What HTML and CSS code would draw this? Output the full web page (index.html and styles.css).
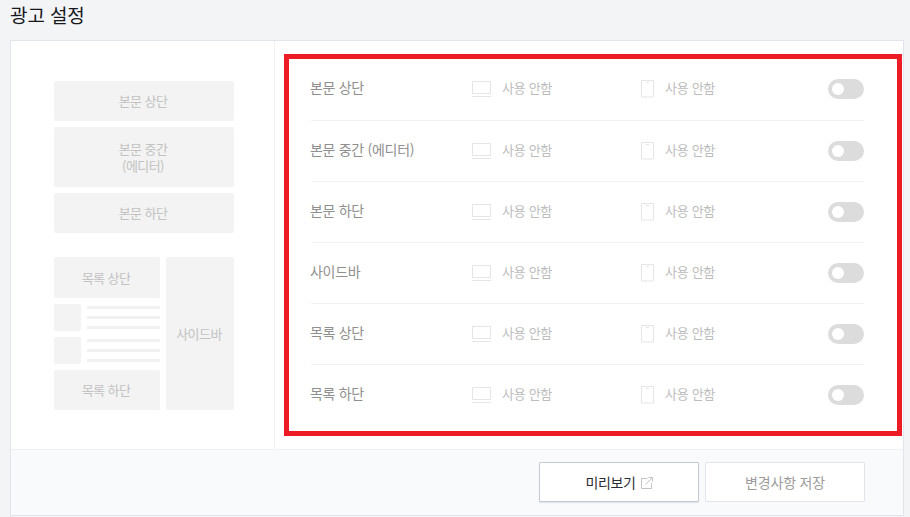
FILE: index.html
```html
<!DOCTYPE html>
<html lang="ko">
<head>
<meta charset="utf-8">
<title>광고 설정</title>
<link rel="stylesheet" href="styles.css">
</head>
<body>
<h1 class="title">광고 설정</h1>
<section class="card">
  <div class="main">
    <aside class="preview">
      <div class="slots">
        <div class="slot h40">본문 상단</div>
        <div class="slot h60">본문 중간<br>(에디터)</div>
        <div class="slot h40">본문 하단</div>
      </div>
      <div class="listing">
        <div class="list-col">
          <div class="slot h41">목록 상단</div>
          <div class="item"><div class="thumb"></div><div class="lines"><i></i><i></i><i></i></div></div>
          <div class="item"><div class="thumb"></div><div class="lines"><i></i><i></i><i></i></div></div>
          <div class="slot h40">목록 하단</div>
        </div>
        <div class="slot side">사이드바</div>
      </div>
    </aside>
    <div class="panel">
      <div class="row">
        <div class="name">본문 상단</div>
        <div class="device pc"><svg class="ico-pc" viewBox="0 0 20 16"><path d="M.5.5h18v12H.5z"/><path d="M0 15.500h19"/></svg><span>사용 안함</span></div>
        <div class="device mo"><svg class="ico-mo" viewBox="0 0 13 18"><path d="M.5.5h12v16.500H.5z"/><path class="dash" d="M5 2.500h3"/></svg><span>사용 안함</span></div>
        <div class="toggle"><b></b></div>
      </div>
      <div class="row">
        <div class="name">본문 중간 (에디터)</div>
        <div class="device pc"><svg class="ico-pc" viewBox="0 0 20 16"><path d="M.5.5h18v12H.5z"/><path d="M0 15.500h19"/></svg><span>사용 안함</span></div>
        <div class="device mo"><svg class="ico-mo" viewBox="0 0 13 18"><path d="M.5.5h12v16.500H.5z"/><path class="dash" d="M5 2.500h3"/></svg><span>사용 안함</span></div>
        <div class="toggle"><b></b></div>
      </div>
      <div class="row">
        <div class="name">본문 하단</div>
        <div class="device pc"><svg class="ico-pc" viewBox="0 0 20 16"><path d="M.5.5h18v12H.5z"/><path d="M0 15.500h19"/></svg><span>사용 안함</span></div>
        <div class="device mo"><svg class="ico-mo" viewBox="0 0 13 18"><path d="M.5.5h12v16.500H.5z"/><path class="dash" d="M5 2.500h3"/></svg><span>사용 안함</span></div>
        <div class="toggle"><b></b></div>
      </div>
      <div class="row">
        <div class="name">사이드바</div>
        <div class="device pc"><svg class="ico-pc" viewBox="0 0 20 16"><path d="M.5.5h18v12H.5z"/><path d="M0 15.500h19"/></svg><span>사용 안함</span></div>
        <div class="device mo"><svg class="ico-mo" viewBox="0 0 13 18"><path d="M.5.5h12v16.500H.5z"/><path class="dash" d="M5 2.500h3"/></svg><span>사용 안함</span></div>
        <div class="toggle"><b></b></div>
      </div>
      <div class="row">
        <div class="name">목록 상단</div>
        <div class="device pc"><svg class="ico-pc" viewBox="0 0 20 16"><path d="M.5.5h18v12H.5z"/><path d="M0 15.500h19"/></svg><span>사용 안함</span></div>
        <div class="device mo"><svg class="ico-mo" viewBox="0 0 13 18"><path d="M.5.5h12v16.500H.5z"/><path class="dash" d="M5 2.500h3"/></svg><span>사용 안함</span></div>
        <div class="toggle"><b></b></div>
      </div>
      <div class="row">
        <div class="name">목록 하단</div>
        <div class="device pc"><svg class="ico-pc" viewBox="0 0 20 16"><path d="M.5.5h18v12H.5z"/><path d="M0 15.500h19"/></svg><span>사용 안함</span></div>
        <div class="device mo"><svg class="ico-mo" viewBox="0 0 13 18"><path d="M.5.5h12v16.500H.5z"/><path class="dash" d="M5 2.500h3"/></svg><span>사용 안함</span></div>
        <div class="toggle"><b></b></div>
      </div>
    </div>
  </div>
  <footer class="actions">
    <button class="btn primary" type="button"><span class="btn-label">미리보기</span><svg class="ico-ext" viewBox="0 0 12 12"><path d="M6.500 1.500H.5v10h10V6"/><path d="M4.500 7.500 11 1M7.500.5h4v4"/></svg></button>
    <button class="btn" type="button">변경사항 저장</button>
  </footer>
</section>
</body>
</html>
```
FILE: styles.css
```css
* { box-sizing: border-box; }
html, body { height: 100%; }
body {
  margin: 0;
  padding: 0 6px 0 10px;
  background: #f3f4f6;
  font-family: "Noto Sans CJK KR", "Noto Sans", sans-serif;
  font-size: 13px;
  overflow: hidden;
}
.title {
  margin: 0;
  height: 40px;
  padding-top: 1px;
  font-size: 19px;
  line-height: 28px;
  font-weight: 400;
  letter-spacing: -0.1px;
  color: #16181c;
}
.card {
  display: flex;
  flex-direction: column;
  height: 476px;
  background: #fff;
  border: 1px solid #e2e5ee;
}
.main { display: flex; height: 409px; border-bottom: 1px solid #eff0f3; }
.preview {
  width: 264px;
  padding: 40px 40px 0 43px;
  border-right: 1px solid #f0f1f3;
  display: flex;
  flex-direction: column;
  gap: 24px;
}
.slots { display: flex; flex-direction: column; gap: 6px; }
.slot {
  display: flex;
  align-items: center;
  justify-content: center;
  text-align: center;
  background: #f3f3f3;
  border-radius: 2px;
  color: #c2c2c2;
  line-height: 17px;
  letter-spacing: -0.55px;
  padding: 0 2px 1px 0;
}
.h40 { height: 40px; }
.h41 { height: 41px; }
.h60 { height: 60px; }
.listing { display: flex; gap: 6px; height: 153px; }
.list-col { width: 106px; display: flex; flex-direction: column; gap: 6px; }
.slot.side { width: 68px; }
.item { display: flex; gap: 6px; height: 27px; }
.thumb { width: 27px; background: #f3f3f3; border-radius: 2px; }
.lines { flex: 1; padding-top: 2px; display: flex; flex-direction: column; gap: 7px; }
.lines i { display: block; height: 3px; background: #f1f1f1; }
.panel {
  width: 618px;
  margin: 13px 0 0 9px;
  height: 382px;
  border: 5px solid #ed1c24;
  padding: 0 33px 0 22px;
}
.row {
  height: 61px;
  display: flex;
  align-items: center;
  border-bottom: 1px solid #f1f1f2;
}
.row:first-child { height: 62px; padding-bottom: 1px; }
.row:last-child { border-bottom: 0; padding-bottom: 1px; }
.name {
  width: 162px;
  margin-left: -1px;
  font-size: 14px;
  color: #8f8f8f;
  letter-spacing: -0.3px;
  padding-bottom: 4px;
}
.device {
  display: flex;
  align-items: center;
  color: #bdbdbd;
  letter-spacing: -0.3px;
}
.device.pc { width: 169px; }
.device.mo { width: 187px; }
.device span { line-height: 17px; padding-bottom: 3px; }
.device svg { fill: none; stroke: #e5e5e5; stroke-width: 1; flex: none; }
.ico-pc { width: 20px; height: 16px; margin-right: 10px; }
.ico-mo { width: 13px; height: 18px; margin-right: 11px; }
.dash { stroke: #e5e5e5; }
.toggle {
  width: 36px;
  height: 20px;
  border-radius: 10px;
  background: #dcdcdc;
  padding: 4px;
}
.toggle b { display: block; width: 12px; height: 12px; border-radius: 50%; background: #fff; }
.actions {
  flex: 1;
  display: flex;
  justify-content: flex-end;
  align-items: flex-start;
  gap: 6px;
  padding: 12px 38px 0 0;
  background: #f9fafb;
}
.btn {
  width: 160px;
  height: 40px;
  display: flex;
  align-items: center;
  justify-content: center;
  background: #fff;
  border: 1px solid #e2e5ee;
  border-radius: 1px;
  font: 400 14px "Noto Sans CJK KR", "Noto Sans", sans-serif;
  letter-spacing: -0.2px;
  color: #9c9c9c;
}
.btn.primary { border-color: #c3cad6; color: #2a2d33; box-shadow: 0 1px 1px rgba(120,130,150,.2); }
.btn-label { letter-spacing: -0.35px; }
.ico-ext { width: 12px; height: 12px; margin: 1px 0 0 5px; fill: none; stroke: #c4c4c4; stroke-width: 1; }
```
